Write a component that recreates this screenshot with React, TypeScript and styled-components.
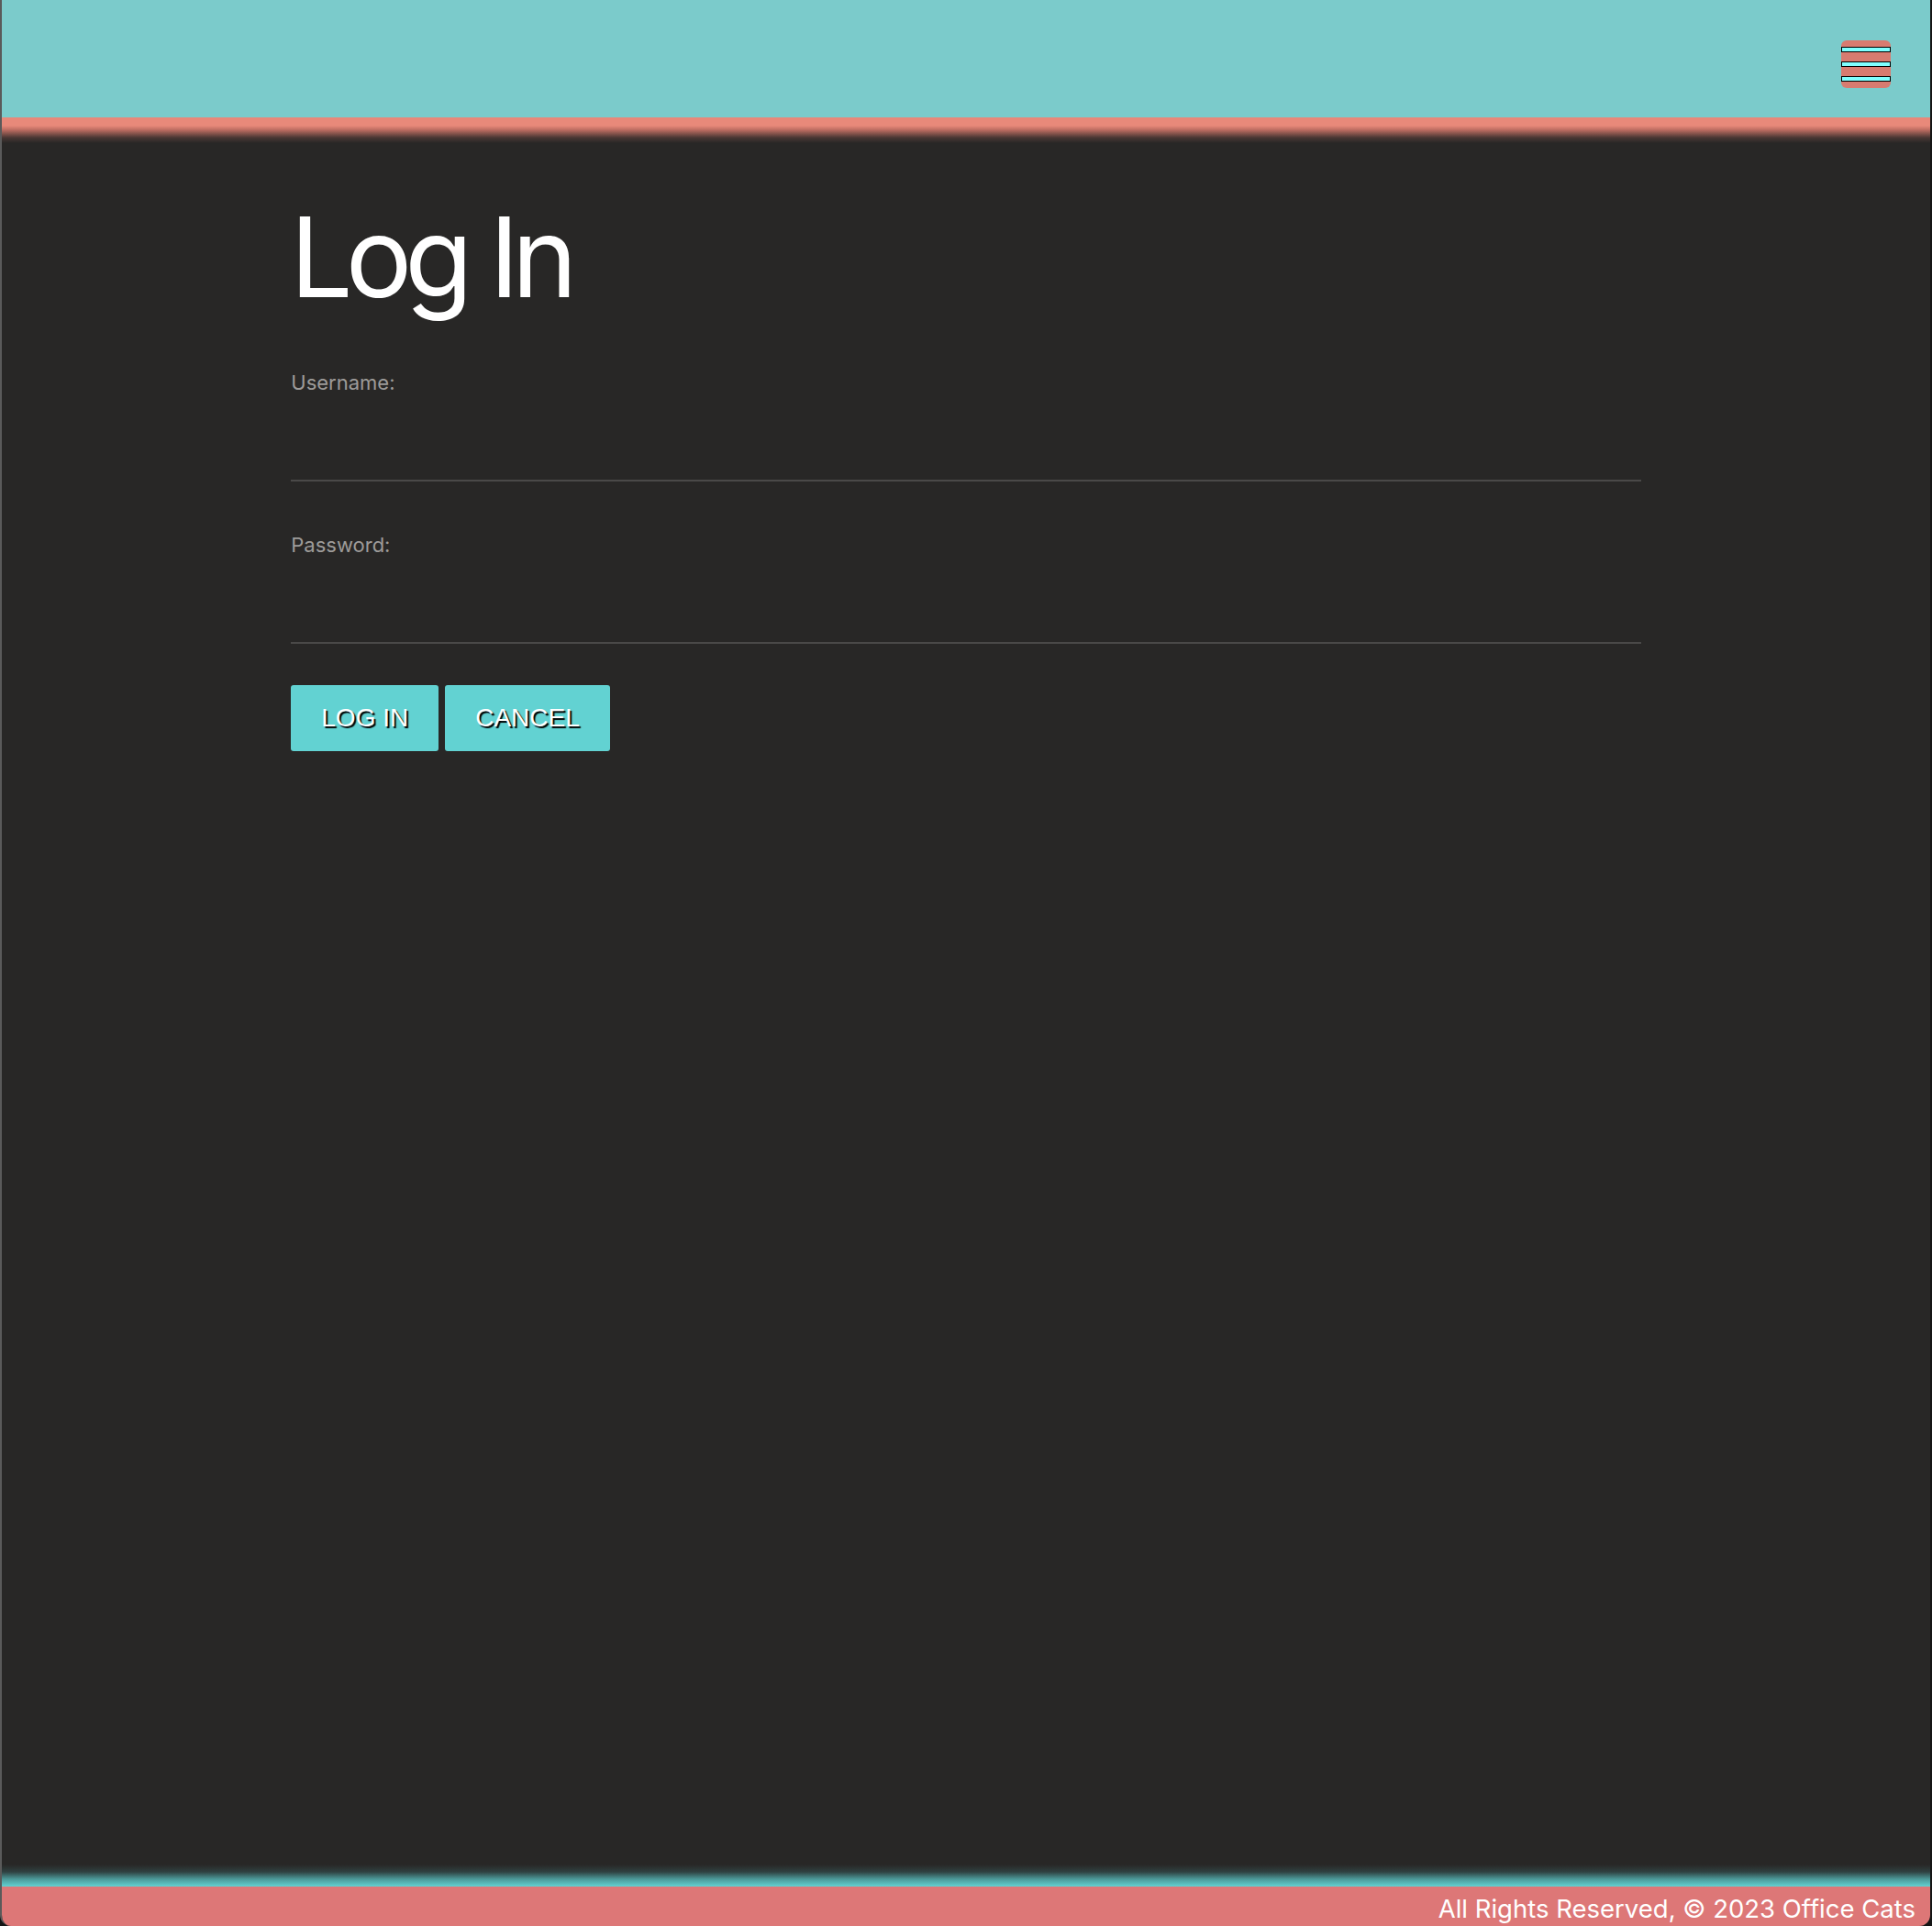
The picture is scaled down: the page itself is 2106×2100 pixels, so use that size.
import React from "react";
import styled, { createGlobalStyle } from "styled-components";

const Global = createGlobalStyle`
  html, body {
    margin: 0;
    padding: 0;
    background: #151515;
  }
  body {
    font-family: "Inter", "Liberation Sans", sans-serif;
  }
  * { box-sizing: border-box; }
`;

const Page = styled.div`
  width: 2104px;
  min-height: 100vh;
  display: flex;
  flex-direction: column;
  background: #282726;
  border-left: 2px solid #5a5a5a;
  border-radius: 0 0 12px 12px;
  overflow: hidden;
`;

const Header = styled.header`
  height: 128px;
  background: #7bcbcb;
  display: flex;
  justify-content: flex-end;
  align-items: flex-start;
  padding: 44px 43px 0 0;
`;

const HeaderStripe = styled.div`
  height: 28px;
  background: linear-gradient(
    to bottom,
    #e8897a 0px,
    #e8897a 9px,
    #b86a5f 14px,
    #4a3734 22px,
    #282726 28px
  );
`;

const MenuButton = styled.button`
  width: 54px;
  height: 52px;
  border: none;
  border-radius: 6px;
  background: #d87b70;
  padding: 7px 0 0;
  display: flex;
  flex-direction: column;
  gap: 10px;
  cursor: pointer;
`;

const MenuBar = styled.span`
  display: block;
  width: 54px;
  height: 6px;
  background: #80ffff;
  border: 1.5px solid #000;
`;

const Main = styled.main`
  flex: 1;
  display: flex;
  flex-direction: column;
`;

const Content = styled.div`
  width: 70%;
  margin: 0 auto;
  padding-top: 52px;
`;

const Title = styled.h1`
  margin: 0 0 0 -1px;
  font-size: 121px;
  font-weight: 400;
  line-height: 1.2;
  letter-spacing: -8px;
  color: #ffffff;
`;

const Field = styled.div`
  display: flex;
  flex-direction: column;
`;

const Label = styled.label<{ $top: number }>`
  margin-top: ${(p) => p.$top}px;
  font-size: 22px;
  line-height: 26px;
  color: #9d9b99;
`;

const Input = styled.input`
  width: 100%;
  height: 95px;
  background: transparent;
  border: none;
  border-bottom: 2px solid #4a4948;
  color: #fff;
  font-size: 24px;
  font-family: inherit;
  outline: none;
`;

const Buttons = styled.div`
  display: flex;
  gap: 7px;
  margin-top: 45px;
`;

const Button = styled.button`
  height: 72px;
  padding: 0 33px;
  border: none;
  border-radius: 3px;
  background: #62d2d2;
  color: #fff;
  font-family: "Liberation Sans", Arial, sans-serif;
  font-size: 28px;
  text-transform: uppercase;
  text-shadow: 2px 2px 1px #000;
  cursor: pointer;
`;

const FooterGlow = styled.div`
  height: 24px;
  background: linear-gradient(
    to bottom,
    #282726 0px,
    #2f4141 8px,
    #4c9a9a 16px,
    #62d2d2 24px
  );
`;

const Footer = styled.footer`
  height: 43px;
  background: #dd7777;
  display: flex;
  justify-content: flex-end;
  align-items: center;
  padding: 4px 16px 0 0;
  color: #fff;
  font-size: 27.5px;
`;

export default function App() {
  return (
    <>
      <Global />
      <Page>
        <Header>
          <MenuButton aria-label="Menu">
            <MenuBar />
            <MenuBar />
            <MenuBar />
          </MenuButton>
        </Header>
        <HeaderStripe />
        <Main>
          <Content>
            <Title>Log In</Title>
            <Field>
              <Label $top={51} htmlFor="username">Username:</Label>
              <Input id="username" type="text" />
            </Field>
            <Field>
              <Label $top={56} htmlFor="password">Password:</Label>
              <Input id="password" type="password" />
            </Field>
            <Buttons>
              <Button>Log In</Button>
              <Button>Cancel</Button>
            </Buttons>
          </Content>
        </Main>
        <FooterGlow />
        <Footer>All Rights Reserved, © 2023 Office Cats</Footer>
      </Page>
    </>
  );
}
